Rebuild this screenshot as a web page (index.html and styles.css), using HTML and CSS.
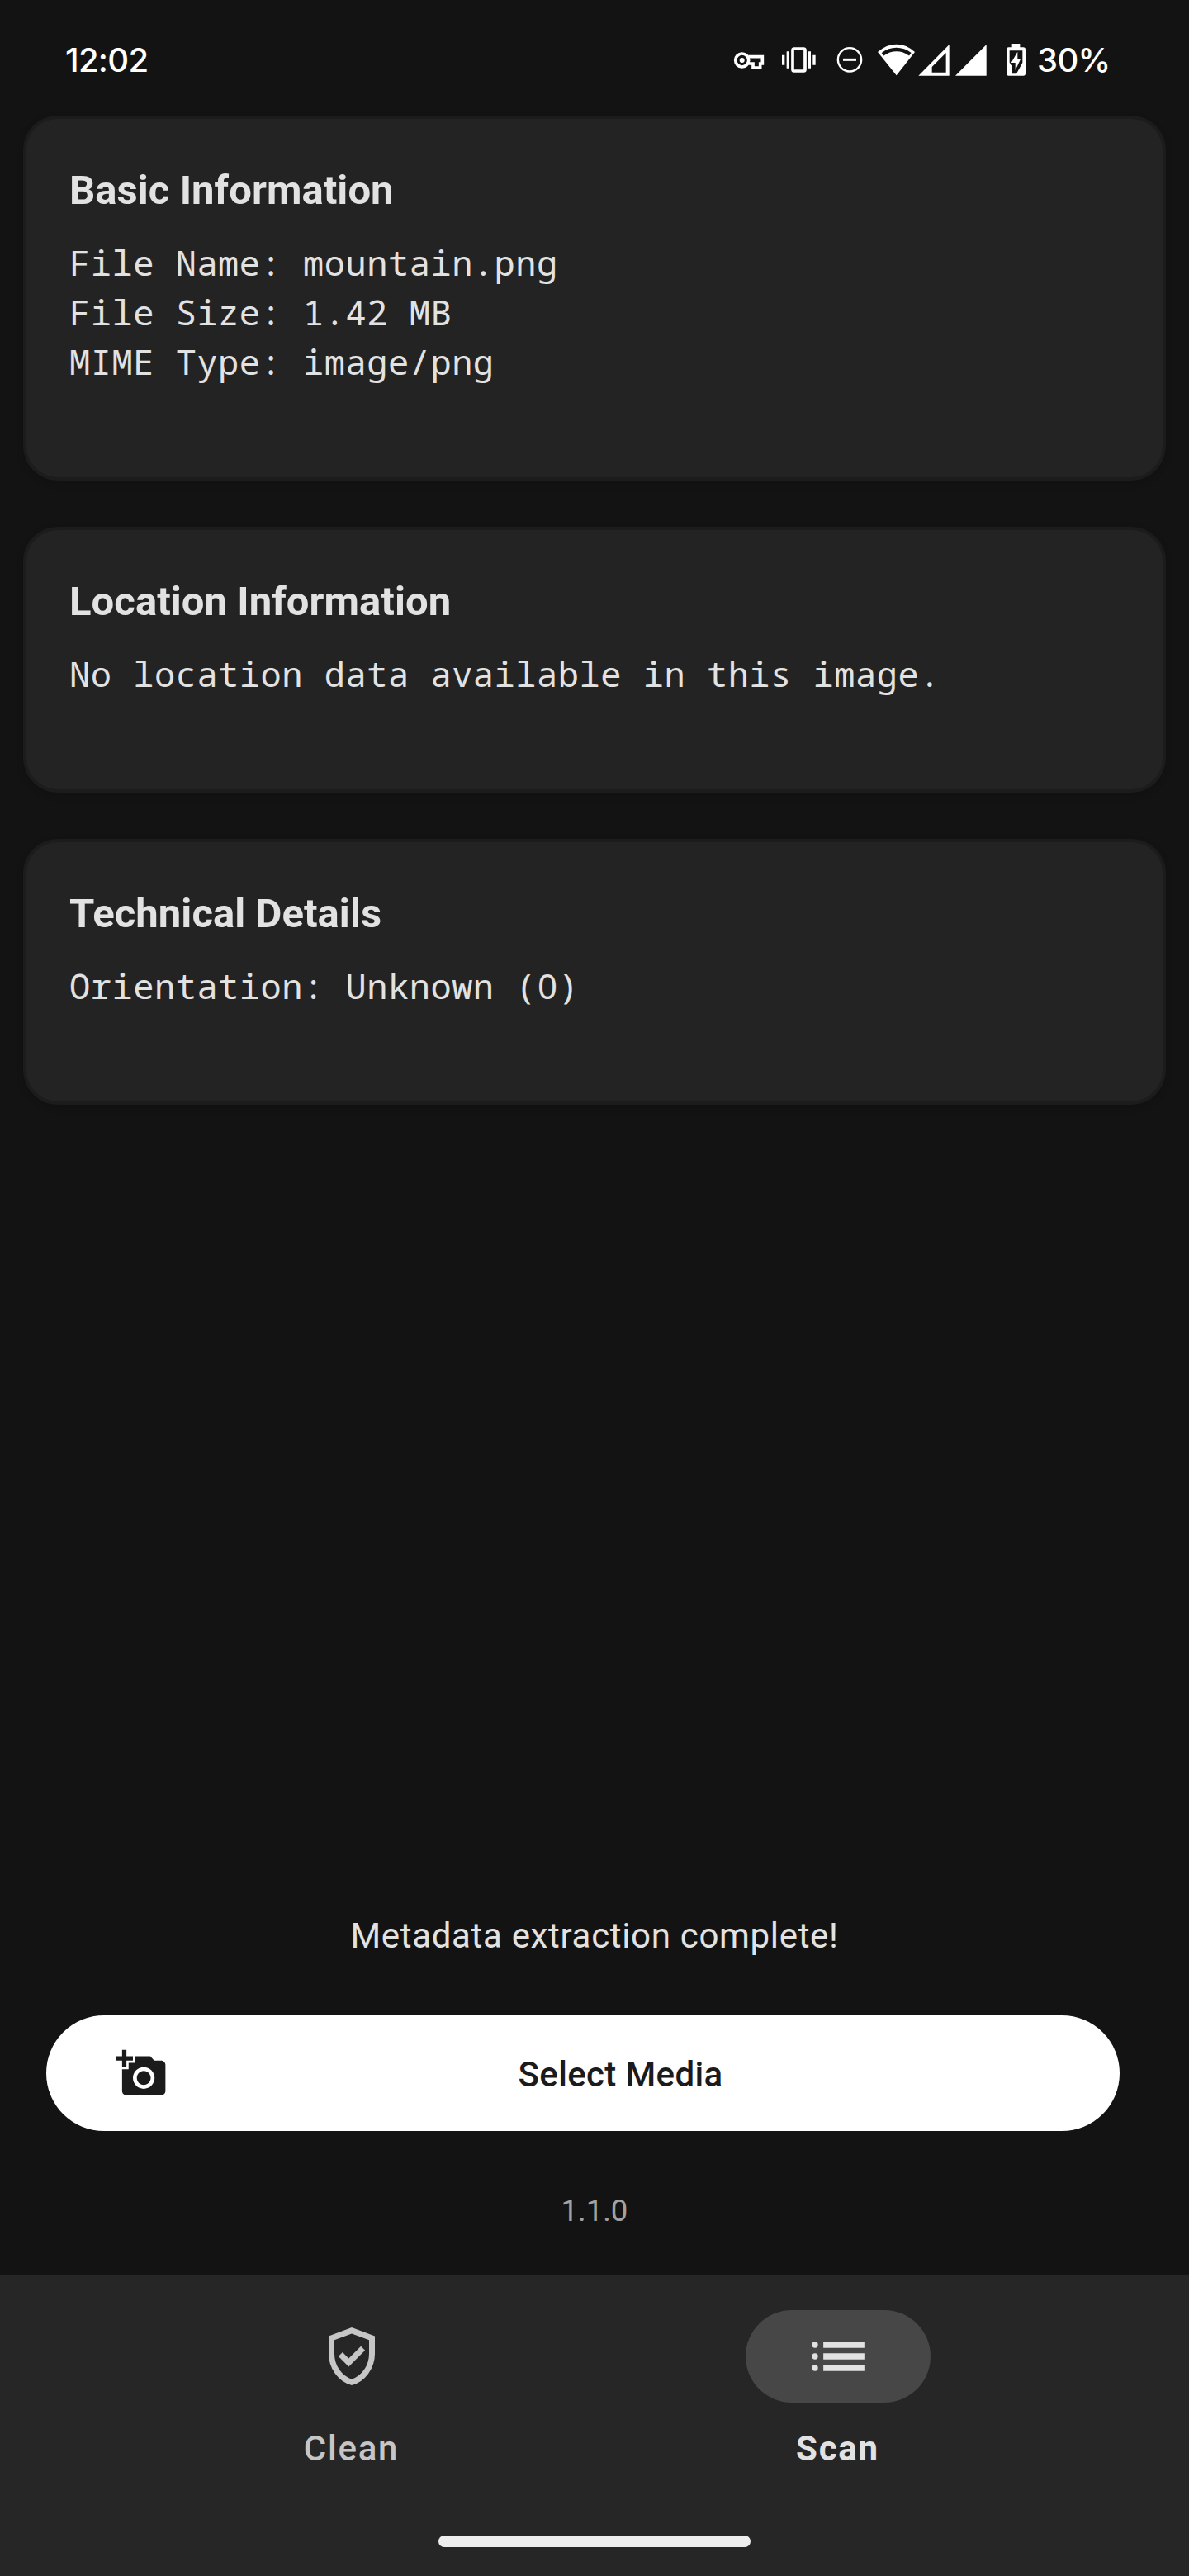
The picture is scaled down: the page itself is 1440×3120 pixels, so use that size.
FILE: index.html
```html
<!DOCTYPE html>
<html lang="en">
<head>
<meta charset="utf-8">
<title>Scan</title>
<link rel="stylesheet" href="styles.css">
</head>
<body>
<div class="screen">
  <header class="status">
    <div class="clock">12:02</div>
    <svg class="status-icons" viewBox="0 0 1170 270" fill="none" stroke="#fff">
      <circle cx="116" cy="129" r="24" stroke-width="11"/>
      <circle cx="116" cy="129" r="9" fill="#fff" stroke="none"/>
      <path d="M139 116H190V141H182V156H156V141H139" stroke-width="11"/>
      <rect x="300" y="87" width="45" height="81" rx="5" stroke-width="11"/>
      <path d="M266 110V146M283 97V158M361 97V158M378 110V146" stroke-width="10"/>
      <circle cx="507" cy="127" r="42.500" stroke-width="7"/>
      <path d="M483 127H531" stroke-width="9"/>
      <path d="M609 99Q640 71 677 71T744 99L677 184Z" fill="#fff" stroke="none"/>
      <path d="M627 107Q650 90 677 90T727 107" class="gap" stroke-width="13"/>
      <path d="M757 185L869 72V185ZM806 173H857V102L806 153Z" fill="#fff" fill-rule="evenodd" stroke="none"/>
      <path d="M891 185L1004 72V185Z" fill="#fff" stroke="none"/>
      <path d="M1097 69H1126V82H1138Q1146 82 1146 90V177Q1146 185 1138 185H1085Q1077 185 1077 177V90Q1077 82 1085 82H1097Z" fill="#fff" stroke="none"/>
      <path d="M1088 94H1135V138L1113 178H1098V148L1088 138Z" class="hole" stroke="none"/>
      <path d="M1117 98L1094 138H1109V165L1128 125H1117Z" fill="#fff" stroke="none"/>
    </svg>
    <div class="battery">30%</div>
  </header>
  <main class="cards">
    <section class="card">
      <h2>Basic Information</h2>
      <p>File Name: mountain.png<br>File Size: 1.42 MB<br>MIME Type: image/png</p>
    </section>
    <section class="card">
      <h2>Location Information</h2>
      <p>No location data available in this image.</p>
    </section>
    <section class="card">
      <h2>Technical Details</h2>
      <p>Orientation: Unknown (<span class="zero">0</span>)</p>
    </section>
  </main>
  <section class="actions">
    <p class="message">Metadata extraction complete!</p>
    <button class="select">
      <svg viewBox="0 0 24 24" fill="currentColor"><path d="M3 4V1h2v3h3v2H5v3H3V6H0V4h3zm3 6V7h3V4h7l1.830 2H21c1.100 0 2 .9 2 2v12c0 1.100-.9 2-2 2H5c-1.100 0-2-.9-2-2V10h3zm7 9c2.760 0 5-2.240 5-5s-2.240-5-5-5-5 2.240-5 5 2.240 5 5 5zm-3.200-5c0 1.770 1.430 3.200 3.200 3.200s3.200-1.430 3.200-3.200-1.430-3.200-3.200-3.200-3.200 1.430-3.200 3.200z"/></svg>
      <span>Select Media</span>
    </button>
    <p class="version">1.1.0</p>
  </section>
  <nav class="nav">
    <div class="tabs">
      <a class="tab">
        <span class="pill"><svg viewBox="0 0 24 24" fill="currentColor"><path d="M10.950 15.550l5.650-5.650-1.425-1.425-4.225 4.225-2.125-2.125L7.400 12l3.550 3.550ZM12 22q-3.475-.875-5.737-3.988T4 11.100V5l8-3 8 3v6.100q0 3.800-2.262 6.913T12 22Zm0-2.100q2.600-.825 4.300-3.300t1.700-5.500V6.375L12 4.125 6 6.375V11.100q0 3.025 1.700 5.500t4.300 3.300Z"/></svg></span>
        <span class="label">Clean</span>
      </a>
      <a class="tab active">
        <span class="pill"><svg viewBox="0 0 24 24" fill="currentColor"><circle cx="4" cy="8" r="1.050"/><circle cx="4" cy="12" r="1.050"/><circle cx="4" cy="16" r="1.050"/><path d="M6.900 6.900H21.100V9.100H6.900ZM6.900 10.900H21.100V13.100H6.900ZM6.900 14.900H21.100V17.100H6.900Z"/></svg></span>
        <span class="label">Scan</span>
      </a>
    </div>
    <div class="handle"></div>
  </nav>
</div>
</body>
</html>
```
FILE: styles.css
```css
* { box-sizing: border-box; }
body { margin: 0; background: #131313; color: #e2e2e2; font-family: Roboto, sans-serif; }
h2, p { margin: 0; }
.screen { height: 3120px; display: flex; flex-direction: column; }

.status { height: 140px; padding: 30px 0 0 79px; display: flex; color: #fff; font: 500 40px/86px Inter, sans-serif; }
.clock { width: 781px; letter-spacing: -0.7px; }
.status-icons { width: 390px; height: 90px; flex: none; }
.status-icons .gap { stroke: #131313; }
.status-icons .hole { fill: #131313; }
.battery { margin-left: 6px; letter-spacing: -0.7px; }

.cards { padding: 0 28px; display: flex; flex-direction: column; gap: 56px; }
.card { background: #232323; border: 4px solid #1c1c1c; border-radius: 42px; padding: 52px 52px 110px; box-shadow: 0 3px 8px rgba(0, 0, 0, 0.15); }
.card h2 { font-size: 49px; line-height: 69px; letter-spacing: 0.06px; margin-bottom: 23px; }
.card p { font: 42px/60px "Noto Sans Mono", "DejaVu Sans Mono", monospace; letter-spacing: 0.53px; }
.zero { display: inline-block; width: 25.730px; line-height: 1; text-align: center; font-family: "Noto Sans", sans-serif; letter-spacing: 0; }

.actions { margin-top: auto; display: flex; flex-direction: column; }
.message { text-align: center; font-size: 42px; line-height: 60px; letter-spacing: 0.68px; margin-bottom: 66px; }
.select { width: 1300px; height: 140px; margin-left: 56px; padding: 0 56px 0 84px; border: 0; border-radius: 70px; background: #fff; color: #1b1b1b; display: flex; align-items: center; font: 500 42px/60px Roboto, sans-serif; letter-spacing: 0.35px; }
.select svg { width: 63px; height: 63px; flex: none; }
.select span { flex: 1; text-align: center; padding-top: 4px; }
.version { text-align: center; font-size: 36.500px; line-height: 50px; color: #a2a2a2; margin: 72px 0 53px; }

.nav { height: 364px; background: #262626; padding: 42px 0 35px; display: flex; flex-direction: column; align-items: center; justify-content: space-between; }
.tabs { width: 1178px; display: flex; }
.tab { flex: 1; display: flex; flex-direction: column; align-items: center; gap: 28px; color: #c6c6c6; }
.active { color: #e2e2e2; }
.pill { width: 224px; height: 112px; border-radius: 56px; display: flex; align-items: center; justify-content: center; }
.active .pill { background: #474747; }
.pill svg { width: 84px; height: 84px; }
.label { font-size: 42px; font-weight: 500; line-height: 56px; letter-spacing: 1.750px; }
.active .label { font-weight: 700; }
.handle { width: 378px; height: 14px; border-radius: 7px; background: #eee; }
```
